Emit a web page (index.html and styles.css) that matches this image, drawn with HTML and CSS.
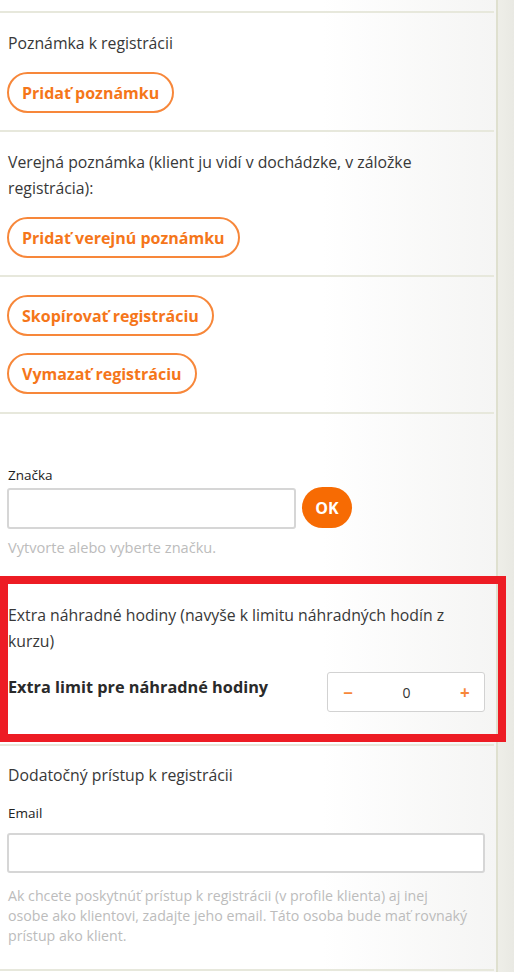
FILE: index.html
```html
<!DOCTYPE html>
<html lang="sk">
<head>
<meta charset="utf-8">
<link rel="stylesheet" href="styles.css">
</head>
<body>
<div class="page">
  <main class="panel">
    <div class="top-space"></div>
    <section class="sec sec-note">
      <p class="txt">Poznámka k registrácii</p>
      <button class="btn-outline">Pridať poznámku</button>
    </section>
    <section class="sec sec-public">
      <p class="txt">Verejná poznámka (klient ju vidí v dochádzke, v záložke registrácia):</p>
      <button class="btn-outline">Pridať verejnú poznámku</button>
    </section>
    <section class="sec sec-actions">
      <button class="btn-outline">Skopírovať registráciu</button>
      <button class="btn-outline">Vymazať registráciu</button>
    </section>
    <section class="sec sec-tag">
      <label class="lbl">Značka</label>
      <div class="tag-row">
        <input class="field field-tag" type="text">
        <button class="btn-ok">OK</button>
      </div>
      <p class="hint hint-tag">Vytvorte alebo vyberte značku.</p>
    </section>
    <section class="sec sec-extra">
      <p class="txt">Extra náhradné hodiny (navyše k limitu náhradných hodín z kurzu)</p>
      <div class="extra-row">
        <span class="bold-lbl">Extra limit pre náhradné hodiny</span>
        <div class="stepper">
          <span class="step-btn">&minus;</span>
          <span class="step-val">0</span>
          <span class="step-btn">+</span>
        </div>
      </div>
      <div class="highlight"></div>
    </section>
    <section class="sec sec-access">
      <p class="txt">Dodatočný prístup k registrácii</p>
      <label class="lbl lbl-email">Email</label>
      <input class="field field-email" type="text">
      <p class="hint hint-long">Ak chcete poskytnúť prístup k registrácii (v profile klienta) aj inej<br>osobe ako klientovi, zadajte jeho email. Táto osoba bude mať rovnaký<br>prístup ako klient.</p>
    </section>
  </main>
  <aside class="side"></aside>
</div>
</body>
</html>
```

FILE: styles.css
```css
* { box-sizing: border-box; }
html, body { margin: 0; padding: 0; }
body {
  font-family: "Open Sans", "Liberation Sans", sans-serif;
  color: #383838;
  background: #fff;
  overflow: hidden;
}
.page {
  display: flex;
  width: 514px;
  height: 972px;
}
.panel {
  width: 496px;
  flex: none;
  background: linear-gradient(to right, #ffffff 65%, #f5f5f4 100%);
}
.side {
  flex: 1;
  border-left: 2px solid #dfe0cf;
  background: linear-gradient(to right, #eeeee8, #e9e9e3);
}
.top-space {
  height: 13px;
  border-bottom: 2px solid #e7e8dc;
  margin-right: 2px;
}
.sec {
  padding: 17px 0 17px 7px;
  border-bottom: 2px solid #e7e8dc;
  margin-right: 2px;
  display: flex;
  flex-direction: column;
  align-items: flex-start;
}
.txt {
  margin: 0 0 16px;
  font-size: 15.8px;
  line-height: 26px;
  padding-left: 1px;
  padding-right: 40px;
}
.btn-outline {
  font-family: inherit;
  font-size: 16px;
  font-weight: 700;
  color: #f5761a;
  background: #fff;
  border: 2px solid #f7873a;
  border-radius: 22px;
  height: 41px;
  padding: 0 13px;
  line-height: 1;
  cursor: pointer;
}
.sec-actions {
  padding-top: 18px;
  padding-bottom: 18px;
  gap: 17px;
}
.sec-tag {
  padding-top: 52px;
  padding-bottom: 22px;
}
.lbl {
  font-size: 13.5px;
  line-height: 18px;
  font-weight: 500;
  color: #222;
  padding-left: 1px;
}
.tag-row {
  display: flex;
  align-items: center;
  gap: 6px;
  margin-top: 4px;
}
.field {
  height: 41px;
  border: 2px solid #d6d6d6;
  border-radius: 3px;
  background: #fff;
  font-family: inherit;
  font-size: 14px;
}
.field-tag { width: 289px; }
.btn-ok {
  width: 50px;
  height: 41px;
  margin-top: -2px;
  border: none;
  border-radius: 21px;
  background: #f76b03;
  color: #fff;
  font-family: inherit;
  font-size: 16px;
  font-weight: 700;
}
.hint {
  margin: 9px 0 0;
  font-size: 13px;
  line-height: 18px;
  color: #bcbcbc;
  padding-left: 1px;
}
.hint-tag { font-size: 14.6px; }
.sec-extra {
  position: relative;
  padding-top: 22px;
  padding-bottom: 32px;
}
.sec-extra .txt { margin-bottom: 18px; }
.extra-row {
  display: flex;
  justify-content: space-between;
  align-items: flex-start;
  width: 478px;
}
.bold-lbl {
  font-size: 16.3px;
  font-weight: 700;
  line-height: 26px;
  padding-top: 2px;
  padding-left: 1px;
  color: #2a2a2a;
}
.stepper {
  width: 158px;
  height: 40px;
  border: 1px solid #d2d2d2;
  border-radius: 3px;
  display: flex;
  align-items: center;
  justify-content: space-between;
  padding: 0 14px 0 15px;
  background: #fff;
}
.step-btn {
  color: #f7873a;
  font-size: 17px;
  font-weight: 700;
  width: 10px;
  text-align: center;
}
.step-val {
  font-size: 14px;
  color: #333;
}
.highlight {
  position: absolute;
  top: -4px;
  bottom: 2px;
  left: 0;
  right: -12px;
  border: 8px solid #ed1c24;
  z-index: 2;
  pointer-events: none;
}
.sec-access {
  padding-top: 16px;
  padding-bottom: 23px;
}
.sec-access .txt { margin-bottom: 16px; }
.lbl-email { margin-bottom: 11px; }
.field-email { width: 478px; height: 40px; }
.hint-long {
  margin-top: 13px;
  line-height: 20px;
  font-size: 14.2px;
  width: 486px;
  white-space: nowrap;
}
```
